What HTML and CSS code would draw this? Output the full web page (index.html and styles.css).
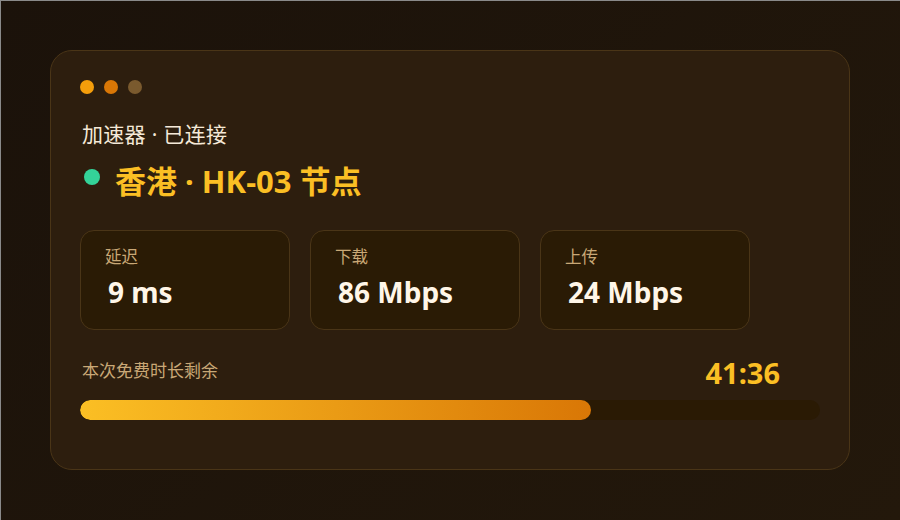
FILE: index.html
```html
<!DOCTYPE html>
<html lang="zh-CN">
<head>
<meta charset="utf-8">
<link rel="stylesheet" href="styles.css">
</head>
<body>
<div class="card">
  <div class="dots">
    <span class="dot d1"></span>
    <span class="dot d2"></span>
    <span class="dot d3"></span>
  </div>
  <div class="subtitle">加速器 · 已连接</div>
  <div class="title"><span class="live"></span><span>香港 · HK-03 节点</span></div>
  <div class="stats">
    <div class="stat"><div class="label">延迟</div><div class="value">9 ms</div></div>
    <div class="stat"><div class="label">下载</div><div class="value">86 Mbps</div></div>
    <div class="stat"><div class="label">上传</div><div class="value">24 Mbps</div></div>
  </div>
  <div class="timer">
    <span class="timer-label">本次免费时长剩余</span>
    <span class="timer-value">41:36</span>
  </div>
  <div class="track"><div class="fill" style="width: 69%"></div></div>
</div>
</body>
</html>
```
FILE: styles.css
```css
* { box-sizing: border-box; }
html, body { margin: 0; padding: 0; }
body {
  width: 900px;
  height: 520px;
  overflow: hidden;
  padding: 50px;
  background: linear-gradient(135deg, #1b120a 0%, #23180b 100%);
  border-top: 1px solid #8a8a8a;
  border-left: 1px solid #8a8a8a;
  font-family: "Noto Sans", "Noto Sans CJK SC", sans-serif;
}
.card {
  width: 800px;
  height: 420px;
  margin: -1px 0 0 -1px;
  background: #2d1e0e;
  border: 1px solid #4a3517;
  border-radius: 22px;
  padding: 29px 29px;
  display: flex;
  flex-direction: column;
}
.dots { display: flex; gap: 10px; height: 14px; }
.dot { width: 14px; height: 14px; border-radius: 50%; }
.d1 { background: #f59e0b; }
.d2 { background: #d97706; }
.d3 { background: #7a5a2e; }
.subtitle {
  margin-top: 26px;
  font-size: 21px;
  line-height: 28px;
  color: #f5e9d8;
  padding-left: 2px;
  letter-spacing: 0.3px;
}
.title {
  margin-top: 13px;
  display: flex;
  align-items: center;
  gap: 15px;
  font-size: 31px;
  line-height: 40px;
  font-weight: 700;
  color: #fbbf24;
  padding-left: 4px;
}
.live { width: 16px; height: 16px; border-radius: 50%; background: #34d399; margin-top: -9px; }
.stats {
  margin-top: 29px;
  display: flex;
  gap: 20px;
}
.stat {
  width: 210px;
  height: 100px;
  background: #2a1b05;
  border: 1px solid #4a3517;
  border-radius: 14px;
  padding: 15px 24px;
}
.label { font-size: 16.5px; line-height: 22px; color: #c9a876; }
.value { margin-top: 6px; font-size: 28px; line-height: 36px; font-weight: 700; color: #fff6e8; padding-left: 3px; }
.timer {
  margin-top: 25px;
  width: 700px;
  display: flex;
  justify-content: space-between;
  align-items: center;
  padding-left: 2px;
}
.timer-label { font-size: 17px; line-height: 24px; color: #c9a876; margin-bottom: 4px; }
.timer-value { font-size: 29px; line-height: 36px; font-weight: 700; color: #fbbf24; }
.track {
  margin-top: 9px;
  height: 20px;
  border-radius: 10px;
  background: #2a1a04;
  overflow: hidden;
}
.fill {
  height: 100%;
  border-radius: 10px;
  background: linear-gradient(90deg, #fbbf24, #d97706);
}
```
